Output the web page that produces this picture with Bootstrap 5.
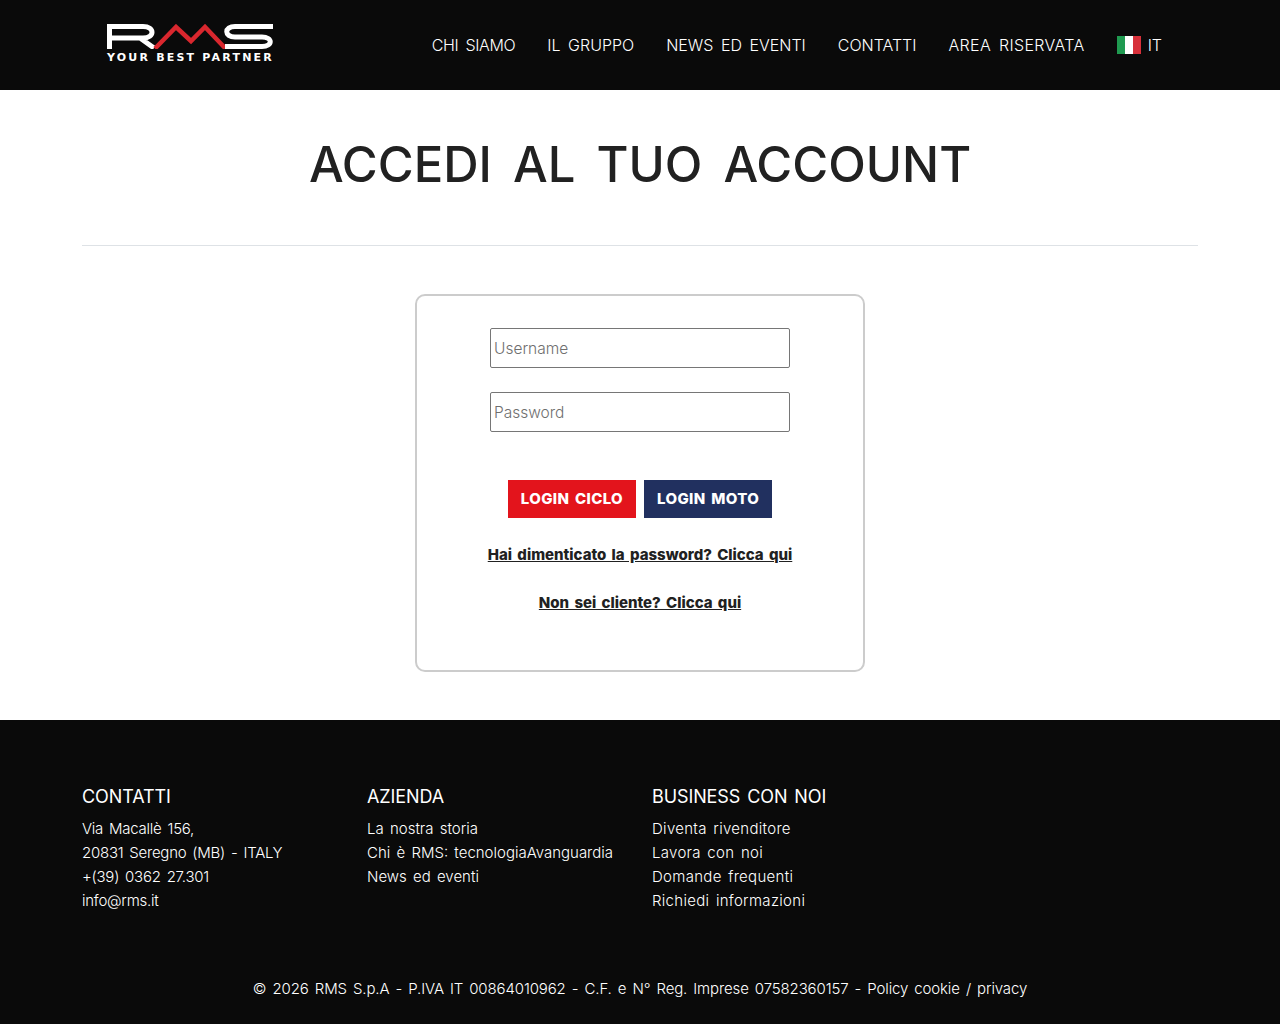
<!DOCTYPE html>
<html lang="it"><head><meta charset="utf-8"><title>RMS</title>
<link href="https://cdn.jsdelivr.net/npm/bootstrap@5.3.0/dist/css/bootstrap.min.css" rel="stylesheet">
<style>
body{font-family:Inter,"Noto Sans",sans-serif;color:#212121;background:#fff;word-spacing:2px}
.top-bar{background:#0a0a0a;height:90px}
.top-inner{height:90px;padding-left:37px;padding-right:48px}
.brand-box{width:168px;display:block;color:#fff;text-decoration:none;margin-top:-2px}
.brand-tag{font:bold 11px "DejaVu Sans",sans-serif;letter-spacing:2.2px;word-spacing:0;line-height:12px;white-space:nowrap;display:block;margin-top:3px}
.menu-row{gap:32px;font-size:16px;font-weight:300;word-spacing:3px}
.menu-row a{color:#fff;text-decoration:none;text-transform:uppercase;white-space:nowrap}
.menu-wide{letter-spacing:.35px}
.menu-narrow{letter-spacing:-.35px}
.flag-link{gap:7px}
.title-main{font-size:49px;font-weight:500;line-height:60px;margin:45px 0 50px;word-spacing:8px}
.rule-line{margin:0 0 48px;border-color:#dee2e6;opacity:1}
.login-box{width:450px;height:378px;border:2px solid #ccc;border-radius:10px;padding-top:32px;margin-bottom:48px}
.field-input{display:block;width:300px;height:40px;margin:0 auto 24px;border:1px solid #767676;border-radius:2px;padding:0 3px;font-size:15.5px;font-weight:300}
.field-input::placeholder{color:#6f6f6f}
.btn-row{gap:8px;margin-top:48px;margin-bottom:26px}
.btn-go{height:38px;border-radius:0;color:#fff;font-weight:800;font-size:15px;padding:0 12px;line-height:36px;white-space:nowrap;letter-spacing:.36px}
.btn-red{background:#e3141c;border-color:#e3141c}
.btn-navy{background:#21305f;border-color:#21305f}
.btn-go:hover{color:#fff}
.under-link{display:block;text-align:center;color:#212121;font-weight:800;font-size:15px;line-height:22px;margin-bottom:26px}
.foot-area{background:#0a0a0a;color:#fff;height:304px;padding-top:65px;font-weight:300;font-size:15px;line-height:24px}
.foot-head{font-size:18px;font-weight:400;line-height:24px;margin:0 0 8px;text-transform:uppercase;color:#fff;letter-spacing:-.1px}
.foot-area a{color:inherit;text-decoration:none}
.foot-list{height:132px}
.col-tight{letter-spacing:-.25px}
.col-loose{letter-spacing:.3px}
.copy-line{margin-top:60px;letter-spacing:-.13px}
</style></head><body>
<header class="top-bar"><div class="container d-flex justify-content-between align-items-center top-inner">
<a class="brand-box" href="#">
<svg width="168" height="25" viewBox="0 0 168 25" fill="none" class="d-block" aria-label="RMS logo">
<path d="M2.5 25V2.5H36C48 2.5 48 14 36 14H5M33 14L47 24" stroke="#fff" stroke-width="5"/>
<path d="M48 24.5L69 3L84 17L98 3L118.500 24.5" stroke="#d9272e" stroke-width="4.5"/>
<path d="M166 2.500H128C117 2.500 117 13 128 13H155C166 13 166 22.500 155 22.500H118" stroke="#fff" stroke-width="5"/>
</svg>
<span class="brand-tag">YOUR BEST PARTNER</span></a>
<nav class="d-flex align-items-center menu-row">
<a href="#" class="menu-narrow">Chi siamo</a><a href="#">Il gruppo</a><a href="#">News ed eventi</a><a href="#">Contatti</a><a href="#" class="menu-wide">Area riservata</a>
<a href="#" class="d-flex align-items-center flag-link"><svg width="24" height="18" viewBox="0 0 3 2" preserveAspectRatio="none"><rect width="1" height="2" fill="#1f9a50"/><rect x="1" width="1" height="2" fill="#fff"/><rect x="2" width="1" height="2" fill="#d7303a"/></svg>IT</a>
</nav></div></header>
<main class="container">
<h1 class="text-center text-uppercase title-main">Accedi al tuo account</h1>
<hr class="rule-line">
<div class="login-box mx-auto">
<input class="field-input" type="text" placeholder="Username">
<input class="field-input" type="password" placeholder="Password">
<div class="d-flex justify-content-center btn-row">
<a href="#" class="btn btn-go btn-red text-uppercase">Login ciclo</a>
<a href="#" class="btn btn-go btn-navy text-uppercase">Login moto</a>
</div>
<a href="#" class="under-link">Hai dimenticato la password? Clicca qui</a>
<a href="#" class="under-link">Non sei cliente? Clicca qui</a>
</div>
</main>
<footer class="foot-area"><div class="container">
<div class="row foot-list">
<div class="col-3"><h2 class="foot-head">Contatti</h2><div class="col-tight">Via Macallè 156,<br>20831 Seregno (MB) - ITALY<br>+(39) 0362 27.301<br>info@rms.it</div></div>
<div class="col-3"><h2 class="foot-head">Azienda</h2><a href="#">La nostra storia</a><br><a href="#">Chi è RMS: tecnologiaAvanguardia</a><br><a href="#">News ed eventi</a></div>
<div class="col-3"><h2 class="foot-head">Business con noi</h2><div class="col-loose"><a href="#">Diventa rivenditore</a><br><a href="#">Lavora con noi</a><br><a href="#">Domande frequenti</a><br><a href="#">Richiedi informazioni</a></div></div>
</div>
<div class="text-center copy-line">© 2026 RMS S.p.A - P.IVA IT 00864010962 - C.F. e N° Reg. Imprese 07582360157 - <a href="#">Policy cookie</a> / <a href="#">privacy</a></div>
</div></footer>
</body></html>
